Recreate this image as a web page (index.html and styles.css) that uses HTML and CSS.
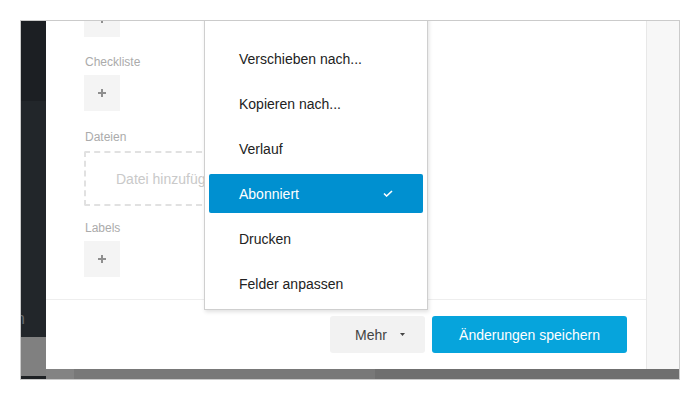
FILE: index.html
```html
<!DOCTYPE html>
<html lang="de">
<head>
<meta charset="utf-8">
<title>Karte</title>
<link rel="stylesheet" href="styles.css">
</head>
<body>
<div class="frame">
  <div class="backdrop">
    <div class="rail">
      <div class="rail-top"></div>
      <div class="rail-mid"><div class="ghost"><span>Suchen</span></div></div>
      <div class="rail-gray"></div>
      <div class="rail-bot"></div>
    </div>
    <div class="bd-a"></div>
    <div class="bd-b"></div>
    <div class="bd-c"></div>
  </div>

  <div class="modal">
    <div class="main">
      <div class="body">
        <div class="field field-first">
          <button class="add" type="button"><svg width="8" height="8" viewBox="0 0 8 8"><path d="M4 0v8M0 4h8" stroke="#8f8f8f" stroke-width="2"/></svg></button>
        </div>
        <div class="field field-check">
          <div class="label">Checkliste</div>
          <button class="add" type="button"><svg width="8" height="8" viewBox="0 0 8 8"><path d="M4 0v8M0 4h8" stroke="#8f8f8f" stroke-width="2"/></svg></button>
        </div>
        <div class="field field-files">
          <div class="label">Dateien</div>
          <div class="dropzone">Datei hinzufügen</div>
        </div>
        <div class="field field-labels">
          <div class="label">Labels</div>
          <button class="add" type="button"><svg width="8" height="8" viewBox="0 0 8 8"><path d="M4 0v8M0 4h8" stroke="#8f8f8f" stroke-width="2"/></svg></button>
        </div>
      </div>
      <div class="footer">
        <button class="btn btn-more" type="button">Mehr <svg class="caret" width="5" height="3" viewBox="0 0 5 3"><path d="M0 0h5L2.5 3z" fill="#444"/></svg></button>
        <button class="btn btn-save" type="button">Änderungen speichern</button>
      </div>
    </div>
    <div class="side"></div>
  </div>

  <ul class="menu">
    <li class="item">Verschieben nach...</li>
    <li class="item">Kopieren nach...</li>
    <li class="item">Verlauf</li>
    <li class="item active"><span>Abonniert</span><svg width="10" height="7" viewBox="0 0 10 7"><path d="M1 3.5l2.6 2.5L9 1" fill="none" stroke="#fff" stroke-width="1.6"/></svg></li>
    <li class="item">Drucken</li>
    <li class="item">Felder anpassen</li>
  </ul>
</div>
</body>
</html>
```

FILE: styles.css
```css
* { box-sizing: border-box; }

html, body {
  margin: 0;
  padding: 0;
  background: #fff;
  font-family: "Liberation Sans", Arial, sans-serif;
}

body { padding: 20px; }

.frame {
  position: relative;
  width: 660px;
  height: 360px;
  border: 1px solid #cbcbcb;
  overflow: hidden;
  background: #6f6f6f;
}

/* underlying page, darkened */
.backdrop {
  display: flex;
  height: 100%;
}

.rail {
  width: 25px;
  display: flex;
  flex-direction: column;
  overflow: hidden;
}

.rail-top { height: 80px; background: #1c1f23; }

.rail-mid {
  height: 236px;
  background: #22262a;
  display: flex;
  flex-direction: column;
  justify-content: flex-end;
  padding-bottom: 8px;
}

.ghost {
  width: 4px;
  display: flex;
  justify-content: flex-end;
  white-space: nowrap;
  font-size: 16px;
  line-height: 20px;
  color: #676a6e;
}

.rail-gray { height: 39px; background: #808080; }
.rail-bot { flex: 1; background: #1e2124; }

.bd-a { width: 28px; background: #838383; }
.bd-b { width: 301px; background: #787878; }
.bd-c { flex: 1; background: #6f6f6f; }

/* modal */
.modal {
  position: absolute;
  left: 25px;
  top: 0;
  width: 640px;
  height: 348px;
  display: flex;
  background: #fff;
}

.main {
  width: 600px;
  display: flex;
  flex-direction: column;
}

.body {
  flex: 1;
  padding-left: 38px;
  overflow: hidden;
  display: flex;
  flex-direction: column;
}

.field { display: flex; flex-direction: column; align-items: flex-start; }
.field-first { margin-top: -20px; }
.field-check { margin-top: 18px; }
.field-files { margin-top: 19px; }
.field-labels { margin-top: 15px; }

.label {
  font-size: 12px;
  line-height: 14px;
  color: #ababab;
  margin-bottom: 6px;
  padding-left: 1px;
}

.field-files .label { margin-bottom: 7px; }

.add {
  width: 36px;
  height: 36px;
  border: 0;
  padding: 0;
  background: #f4f4f4;
  display: flex;
  align-items: center;
  justify-content: center;
}

.dropzone {
  height: 55px;
  padding: 0 30px;
  border: 2px dashed #e1e1e1;
  border-radius: 2px;
  display: flex;
  align-items: center;
  font-size: 14px;
  color: #c9c9c9;
  white-space: nowrap;
}

.footer {
  border-top: 1px solid #eeeeee;
  padding: 16px 19px 16px 0;
  display: flex;
  justify-content: flex-end;
  gap: 7px;
}

.btn {
  height: 37px;
  border: 0;
  border-radius: 3px;
  font-family: "Liberation Sans", Arial, sans-serif;
  font-size: 14px;
  display: inline-flex;
  align-items: center;
}

.btn-more {
  width: 95px;
  padding: 0 0 0 25px;
  background: #f2f2f2;
  color: #444;
  gap: 13px;
}

.caret { display: block; }

.btn-save {
  width: 195px;
  justify-content: center;
  background: #06a4dc;
  color: #fff;
}

.side {
  flex: 1;
  background: #f7f7f7;
  border-left: 1px solid #e8e8e8;
}

/* dropdown menu */
.menu {
  position: absolute;
  left: 183px;
  top: -10px;
  width: 224px;
  margin: 0;
  padding: 24px 0 3px;
  list-style: none;
  background: #fff;
  border: 1px solid #cfcfcf;
  box-shadow: 1px 2px 4px rgba(0, 0, 0, 0.12);
  display: flex;
  flex-direction: column;
}

.item {
  height: 39px;
  margin: 3px 4px;
  padding: 0 30px;
  border-radius: 2px;
  display: flex;
  align-items: center;
  justify-content: space-between;
  font-size: 14px;
  color: #222;
  white-space: nowrap;
}

.item.active {
  background: #0090d0;
  color: #fff;
}
```
